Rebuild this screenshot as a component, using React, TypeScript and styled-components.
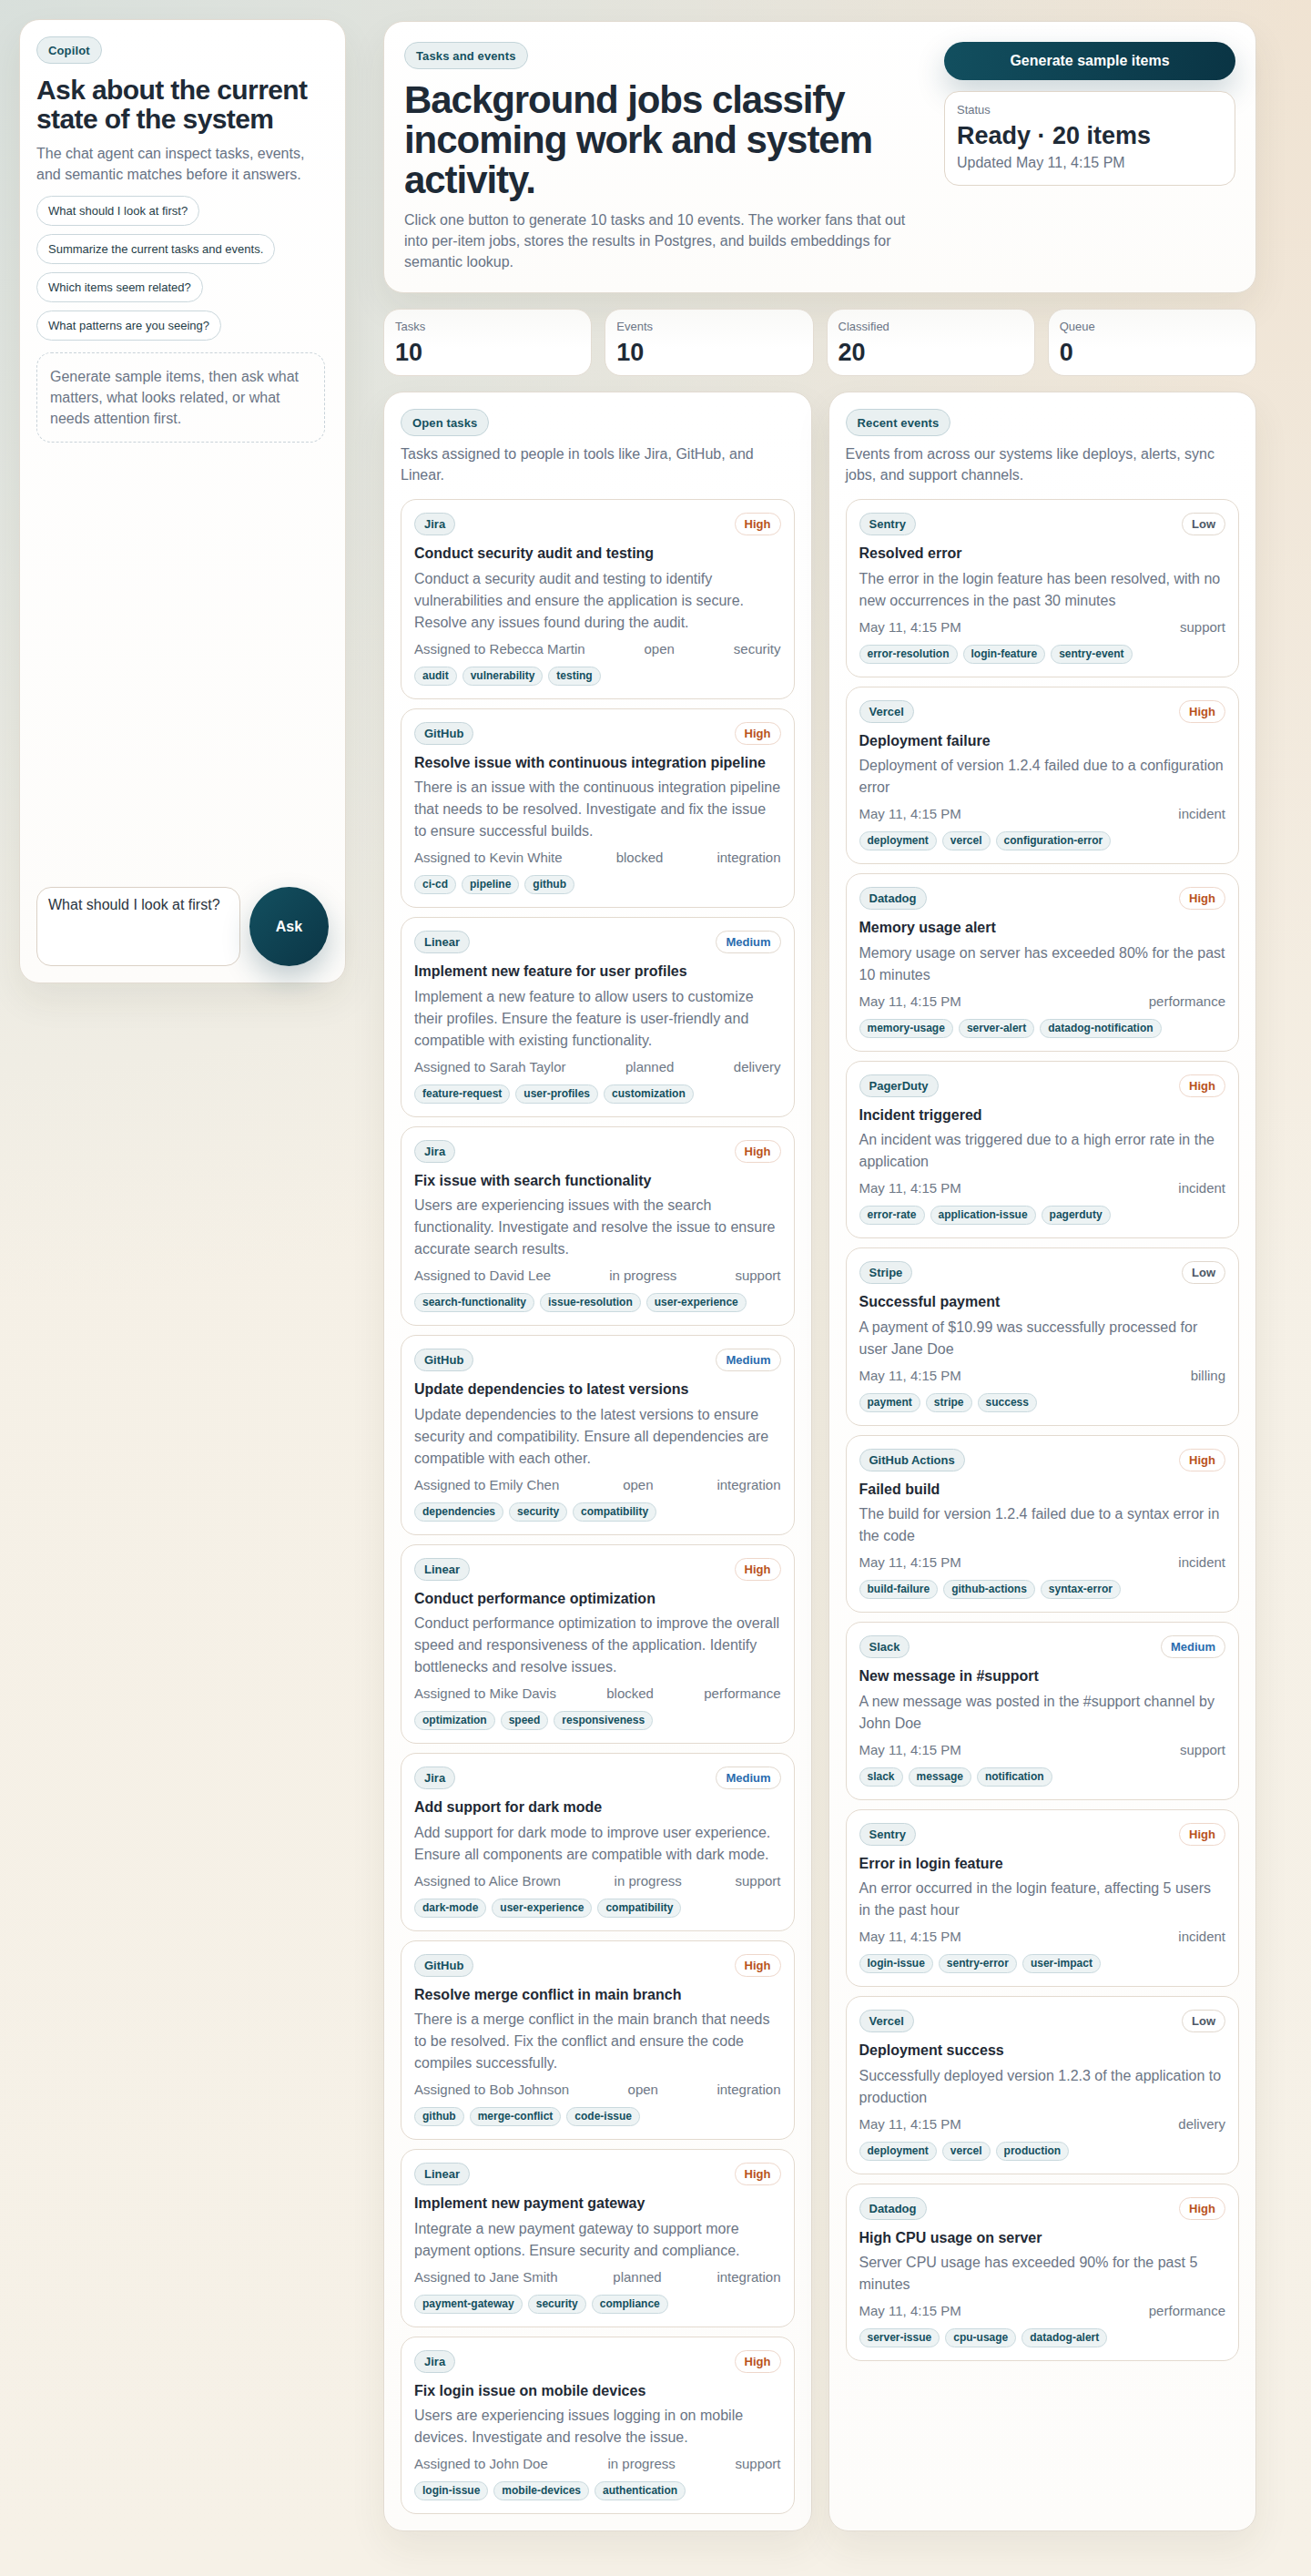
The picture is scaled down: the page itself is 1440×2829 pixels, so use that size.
import React from "react";
import styled, { createGlobalStyle } from "styled-components";

const GlobalStyle = createGlobalStyle`
  * { box-sizing: border-box; }
  html, body { margin: 0; padding: 0; }
  body {
    font-family: "Liberation Sans", Arial, sans-serif;
    color: #1e2a36;
    min-height: 2829px;
    background:
      radial-gradient(circle at 0% 0%, rgba(214, 222, 218, 0.9), rgba(214, 222, 218, 0) 45%),
      radial-gradient(circle at 100% 0%, rgba(240, 226, 208, 0.9), rgba(240, 226, 208, 0) 45%),
      linear-gradient(180deg, #efede7 0%, #f5f0e6 40%, #f6f1e7 100%);
  }
`;

type Priority = "High" | "Medium" | "Low";

interface Task {
  source: string;
  priority: Priority;
  title: string;
  body: string;
  assignee: string;
  status: string;
  area: string;
  tags: string[];
}

interface EventItem {
  source: string;
  priority: Priority;
  title: string;
  body: string;
  area: string;
  tags: string[];
}

const tasks: Task[] = [
  { source: "Jira", priority: "High", title: "Conduct security audit and testing", body: "Conduct a security audit and testing to identify vulnerabilities and ensure the application is secure. Resolve any issues found during the audit.", assignee: "Rebecca Martin", status: "open", area: "security", tags: ["audit", "vulnerability", "testing"] },
  { source: "GitHub", priority: "High", title: "Resolve issue with continuous integration pipeline", body: "There is an issue with the continuous integration pipeline that needs to be resolved. Investigate and fix the issue to ensure successful builds.", assignee: "Kevin White", status: "blocked", area: "integration", tags: ["ci-cd", "pipeline", "github"] },
  { source: "Linear", priority: "Medium", title: "Implement new feature for user profiles", body: "Implement a new feature to allow users to customize their profiles. Ensure the feature is user-friendly and compatible with existing functionality.", assignee: "Sarah Taylor", status: "planned", area: "delivery", tags: ["feature-request", "user-profiles", "customization"] },
  { source: "Jira", priority: "High", title: "Fix issue with search functionality", body: "Users are experiencing issues with the search functionality. Investigate and resolve the issue to ensure accurate search results.", assignee: "David Lee", status: "in progress", area: "support", tags: ["search-functionality", "issue-resolution", "user-experience"] },
  { source: "GitHub", priority: "Medium", title: "Update dependencies to latest versions", body: "Update dependencies to the latest versions to ensure security and compatibility. Ensure all dependencies are compatible with each other.", assignee: "Emily Chen", status: "open", area: "integration", tags: ["dependencies", "security", "compatibility"] },
  { source: "Linear", priority: "High", title: "Conduct performance optimization", body: "Conduct performance optimization to improve the overall speed and responsiveness of the application. Identify bottlenecks and resolve issues.", assignee: "Mike Davis", status: "blocked", area: "performance", tags: ["optimization", "speed", "responsiveness"] },
  { source: "Jira", priority: "Medium", title: "Add support for dark mode", body: "Add support for dark mode to improve user experience. Ensure all components are compatible with dark mode.", assignee: "Alice Brown", status: "in progress", area: "support", tags: ["dark-mode", "user-experience", "compatibility"] },
  { source: "GitHub", priority: "High", title: "Resolve merge conflict in main branch", body: "There is a merge conflict in the main branch that needs to be resolved. Fix the conflict and ensure the code compiles successfully.", assignee: "Bob Johnson", status: "open", area: "integration", tags: ["github", "merge-conflict", "code-issue"] },
  { source: "Linear", priority: "High", title: "Implement new payment gateway", body: "Integrate a new payment gateway to support more payment options. Ensure security and compliance.", assignee: "Jane Smith", status: "planned", area: "integration", tags: ["payment-gateway", "security", "compliance"] },
  { source: "Jira", priority: "High", title: "Fix login issue on mobile devices", body: "Users are experiencing issues logging in on mobile devices. Investigate and resolve the issue.", assignee: "John Doe", status: "in progress", area: "support", tags: ["login-issue", "mobile-devices", "authentication"] },
];

const events: EventItem[] = [
  { source: "Sentry", priority: "Low", title: "Resolved error", body: "The error in the login feature has been resolved, with no new occurrences in the past 30 minutes", area: "support", tags: ["error-resolution", "login-feature", "sentry-event"] },
  { source: "Vercel", priority: "High", title: "Deployment failure", body: "Deployment of version 1.2.4 failed due to a configuration error", area: "incident", tags: ["deployment", "vercel", "configuration-error"] },
  { source: "Datadog", priority: "High", title: "Memory usage alert", body: "Memory usage on server has exceeded 80% for the past 10 minutes", area: "performance", tags: ["memory-usage", "server-alert", "datadog-notification"] },
  { source: "PagerDuty", priority: "High", title: "Incident triggered", body: "An incident was triggered due to a high error rate in the application", area: "incident", tags: ["error-rate", "application-issue", "pagerduty"] },
  { source: "Stripe", priority: "Low", title: "Successful payment", body: "A payment of $10.99 was successfully processed for user Jane Doe", area: "billing", tags: ["payment", "stripe", "success"] },
  { source: "GitHub Actions", priority: "High", title: "Failed build", body: "The build for version 1.2.4 failed due to a syntax error in the code", area: "incident", tags: ["build-failure", "github-actions", "syntax-error"] },
  { source: "Slack", priority: "Medium", title: "New message in #support", body: "A new message was posted in the #support channel by John Doe", area: "support", tags: ["slack", "message", "notification"] },
  { source: "Sentry", priority: "High", title: "Error in login feature", body: "An error occurred in the login feature, affecting 5 users in the past hour", area: "incident", tags: ["login-issue", "sentry-error", "user-impact"] },
  { source: "Vercel", priority: "Low", title: "Deployment success", body: "Successfully deployed version 1.2.3 of the application to production", area: "delivery", tags: ["deployment", "vercel", "production"] },
  { source: "Datadog", priority: "High", title: "High CPU usage on server", body: "Server CPU usage has exceeded 90% for the past 5 minutes", area: "performance", tags: ["server-issue", "cpu-usage", "datadog-alert"] },
];

const suggestions = [
  "What should I look at first?",
  "Summarize the current tasks and events.",
  "Which items seem related?",
  "What patterns are you seeing?",
];

const stats = [
  { label: "Tasks", value: "10" },
  { label: "Events", value: "10" },
  { label: "Classified", value: "20" },
  { label: "Queue", value: "0" },
];

/* ---------- layout ---------- */

const Page = styled.div`
  display: grid;
  grid-template-columns: 359px 959px;
  column-gap: 41px;
  align-items: start;
  padding: 21px 20px 40px 21px;
`;

const Main = styled.main`
  display: flex;
  flex-direction: column;
  gap: 17px;
  padding-top: 2px;
`;

const Surface = styled.section`
  background: linear-gradient(180deg, #ffffff 0%, #fdfcfa 100%);
  border: 1px solid #e2dbd1;
  box-shadow: 0 18px 40px rgba(60, 50, 35, 0.07);
`;

/* ---------- shared pills ---------- */

const Eyebrow = styled.span`
  display: inline-flex;
  align-self: flex-start;
  align-items: center;
  height: 30px;
  padding: 0 12px;
  border-radius: 999px;
  background: #e9f0f1;
  border: 1px solid #c3d4d9;
  color: #15505f;
  font-size: 13px;
  font-weight: 700;
  letter-spacing: 0.01em;
`;

const Lead = styled.p`
  margin: 0;
  font-size: 16px;
  line-height: 23px;
  color: #687385;
`;

/* ---------- copilot ---------- */

const Copilot = styled(Surface)`
  height: 1059px;
  border-radius: 22px;
  padding: 18px;
  display: flex;
  flex-direction: column;
`;

const CopilotTitle = styled.h2`
  margin: 13px 0 11px;
  font-size: 30px;
  line-height: 31.5px;
  font-weight: 700;
  letter-spacing: -0.02em;
  color: #1e2a36;
`;

const Suggestions = styled.div`
  display: flex;
  flex-direction: column;
  align-items: flex-start;
  gap: 9px;
  margin-top: 12px;
`;

const SuggestionChip = styled.button`
  font-family: inherit;
  font-size: 13px;
  line-height: 15px;
  color: #1f3d47;
  background: #ffffff;
  border: 1px solid #cad7dc;
  border-radius: 999px;
  padding: 8px 12px;
  cursor: pointer;
`;

const Thread = styled.div`
  flex: 1;
  margin-top: 13px;
  padding-right: 4px;
`;

const EmptyNote = styled.div`
  border: 1px dashed #c9d3d9;
  border-radius: 16px;
  padding: 14px;
  font-size: 16px;
  line-height: 23px;
  color: #6b7585;
`;

const Composer = styled.form`
  display: grid;
  grid-template-columns: 1fr 87px;
  gap: 10px;
  align-items: end;
`;

const Prompt = styled.textarea`
  height: 87px;
  resize: none;
  font-family: inherit;
  font-size: 16px;
  color: #2a3440;
  background: #ffffff;
  border: 1px solid #dbd1c6;
  border-radius: 16px;
  padding: 10px 12px;
  outline: none;
`;

const AskButton = styled.button`
  width: 87px;
  height: 87px;
  border-radius: 50%;
  border: none;
  font-family: inherit;
  font-size: 16px;
  font-weight: 700;
  color: #ffffff;
  background: linear-gradient(135deg, #135060 0%, #0b3545 100%);
  box-shadow: 0 14px 30px rgba(16, 64, 82, 0.25);
  cursor: pointer;
`;

/* ---------- hero ---------- */

const Hero = styled(Surface)`
  border-radius: 22px;
  padding: 22px;
  display: grid;
  grid-template-columns: 1fr 320px;
  gap: 24px;
`;

const HeroCopy = styled.div`
  display: flex;
  flex-direction: column;
`;

const HeroTitle = styled.h1`
  margin: 12px 0 10px;
  font-size: 42px;
  line-height: 44px;
  font-weight: 700;
  letter-spacing: -0.025em;
  color: #1e2a36;
`;

const HeroSide = styled.div`
  display: flex;
  flex-direction: column;
  gap: 12px;
`;

const GenerateButton = styled.button`
  height: 42px;
  border: none;
  border-radius: 999px;
  font-family: inherit;
  font-size: 16px;
  font-weight: 700;
  color: #ffffff;
  background: linear-gradient(100deg, #124f5f 0%, #0a3444 100%);
  box-shadow: 0 14px 32px rgba(16, 64, 82, 0.22);
  cursor: pointer;
`;

const StatusCard = styled.div`
  background: #ffffff;
  border: 1px solid #e0d6ca;
  border-radius: 16px;
  padding: 12px 13px 13px;
  display: flex;
  flex-direction: column;
`;

const SmallLabel = styled.span`
  font-size: 13px;
  line-height: 16px;
  color: #6b7585;
`;

const StatusValue = styled.strong`
  margin-top: 5px;
  font-size: 27px;
  line-height: 31px;
  font-weight: 700;
  color: #1e2a36;
`;

const StatusMeta = styled.span`
  margin-top: 2px;
  font-size: 16px;
  line-height: 23px;
  color: #687385;
`;

/* ---------- stats ---------- */

const StatsRow = styled.div`
  display: grid;
  grid-template-columns: repeat(4, 1fr);
  gap: 14px;
`;

const StatCard = styled.div`
  background: linear-gradient(180deg, #f9f9f7 0%, #ffffff 60%);
  border: 1px solid #e3dcd2;
  border-radius: 18px;
  padding: 11px 12px 10px;
  display: flex;
  flex-direction: column;
  gap: 5px;
`;

const StatValue = styled.strong`
  font-size: 27px;
  line-height: 30px;
  font-weight: 700;
  color: #1e2a36;
`;

/* ---------- columns ---------- */

const Columns = styled.div`
  display: grid;
  grid-template-columns: 1fr 1fr;
  gap: 18px;
  align-items: stretch;
`;

const Panel = styled(Surface)`
  border-radius: 22px;
  padding: 18px;
  display: flex;
  flex-direction: column;
`;

const PanelLead = styled(Lead)`
  margin-top: 8px;
`;

const CardList = styled.div`
  display: flex;
  flex-direction: column;
  gap: 10px;
  margin-top: 15px;
`;

const ItemCard = styled.article`
  background: #ffffff;
  border: 1px solid #e3dacf;
  border-radius: 17px;
  padding: 14px;
  display: flex;
  flex-direction: column;
`;

const CardHead = styled.div`
  display: flex;
  justify-content: space-between;
  align-items: center;
`;

const SourceBadge = styled.span`
  display: inline-flex;
  align-items: center;
  height: 25px;
  padding: 0 10px;
  border-radius: 999px;
  background: #ebf1f2;
  border: 1px solid #c6d6db;
  color: #15505f;
  font-size: 13px;
  font-weight: 700;
`;

const priorityColor: Record<Priority, string> = {
  High: "#b9531d",
  Medium: "#2a6cae",
  Low: "#4d5866",
};

const priorityBorder: Record<Priority, string> = {
  High: "#eed7cb",
  Medium: "#e1d8ce",
  Low: "#e0d7cd",
};

const PriorityBadge = styled.span<{ $level: Priority }>`
  display: inline-flex;
  align-items: center;
  height: 25px;
  padding: 0 10px;
  border-radius: 999px;
  background: #ffffff;
  border: 1px solid ${(p) => priorityBorder[p.$level]};
  color: ${(p) => priorityColor[p.$level]};
  font-size: 13px;
  font-weight: 700;
`;

const CardTitle = styled.h3`
  margin: 9px 0 0;
  font-size: 16px;
  line-height: 21.5px;
  font-weight: 700;
  color: #1f2a35;
`;

const CardBody = styled.p`
  margin: 5px 0 0;
  font-size: 16px;
  line-height: 24px;
  color: #6b7585;
`;

const MetaRow = styled.div`
  margin-top: 7px;
  display: flex;
  justify-content: space-between;
  font-size: 15px;
  line-height: 20px;
  color: #6e7886;
`;

const TagRow = styled.div`
  margin-top: 9px;
  display: flex;
  flex-wrap: wrap;
  gap: 6px;
`;

const Tag = styled.span`
  padding: 3px 8px;
  border-radius: 999px;
  background: #edf3f4;
  border: 1px solid #c9d9de;
  color: #15505f;
  font-size: 12px;
  line-height: 13px;
  font-weight: 700;
`;

/* ---------- components ---------- */

function Tags({ items }: { items: string[] }) {
  return (
    <TagRow>
      {items.map((t) => (
        <Tag key={t}>{t}</Tag>
      ))}
    </TagRow>
  );
}

function TaskCard({ task }: { task: Task }) {
  return (
    <ItemCard>
      <CardHead>
        <SourceBadge>{task.source}</SourceBadge>
        <PriorityBadge $level={task.priority}>{task.priority}</PriorityBadge>
      </CardHead>
      <CardTitle>{task.title}</CardTitle>
      <CardBody>{task.body}</CardBody>
      <MetaRow>
        <span>Assigned to {task.assignee}</span>
        <span>{task.status}</span>
        <span>{task.area}</span>
      </MetaRow>
      <Tags items={task.tags} />
    </ItemCard>
  );
}

function EventCard({ event }: { event: EventItem }) {
  return (
    <ItemCard>
      <CardHead>
        <SourceBadge>{event.source}</SourceBadge>
        <PriorityBadge $level={event.priority}>{event.priority}</PriorityBadge>
      </CardHead>
      <CardTitle>{event.title}</CardTitle>
      <CardBody>{event.body}</CardBody>
      <MetaRow>
        <span>May 11, 4:15 PM</span>
        <span>{event.area}</span>
      </MetaRow>
      <Tags items={event.tags} />
    </ItemCard>
  );
}

export default function App() {
  return (
    <>
      <GlobalStyle />
      <Page>
        <Copilot as="aside">
          <Eyebrow>Copilot</Eyebrow>
          <CopilotTitle>Ask about the current state of the system</CopilotTitle>
          <Lead>The chat agent can inspect tasks, events, and semantic matches before it answers.</Lead>
          <Suggestions>
            {suggestions.map((s) => (
              <SuggestionChip key={s} type="button">
                {s}
              </SuggestionChip>
            ))}
          </Suggestions>
          <Thread>
            <EmptyNote>
              Generate sample items, then ask what matters, what looks related, or what needs attention first.
            </EmptyNote>
          </Thread>
          <Composer onSubmit={(e) => e.preventDefault()}>
            <Prompt defaultValue="What should I look at first?" />
            <AskButton type="submit">Ask</AskButton>
          </Composer>
        </Copilot>

        <Main>
          <Hero>
            <HeroCopy>
              <Eyebrow>Tasks and events</Eyebrow>
              <HeroTitle>Background jobs classify incoming work and system activity.</HeroTitle>
              <Lead>
                Click one button to generate 10 tasks and 10 events. The worker fans that out into per-item jobs,
                stores the results in Postgres, and builds embeddings for semantic lookup.
              </Lead>
            </HeroCopy>
            <HeroSide>
              <GenerateButton type="button">Generate sample items</GenerateButton>
              <StatusCard>
                <SmallLabel>Status</SmallLabel>
                <StatusValue>Ready · 20 items</StatusValue>
                <StatusMeta>Updated May 11, 4:15 PM</StatusMeta>
              </StatusCard>
            </HeroSide>
          </Hero>

          <StatsRow>
            {stats.map((s) => (
              <StatCard key={s.label}>
                <SmallLabel>{s.label}</SmallLabel>
                <StatValue>{s.value}</StatValue>
              </StatCard>
            ))}
          </StatsRow>

          <Columns>
            <Panel>
              <Eyebrow>Open tasks</Eyebrow>
              <PanelLead>Tasks assigned to people in tools like Jira, GitHub, and Linear.</PanelLead>
              <CardList>
                {tasks.map((t) => (
                  <TaskCard key={t.title} task={t} />
                ))}
              </CardList>
            </Panel>
            <Panel>
              <Eyebrow>Recent events</Eyebrow>
              <PanelLead>Events from across our systems like deploys, alerts, sync jobs, and support channels.</PanelLead>
              <CardList>
                {events.map((e) => (
                  <EventCard key={e.title} event={e} />
                ))}
              </CardList>
            </Panel>
          </Columns>
        </Main>
      </Page>
    </>
  );
}
